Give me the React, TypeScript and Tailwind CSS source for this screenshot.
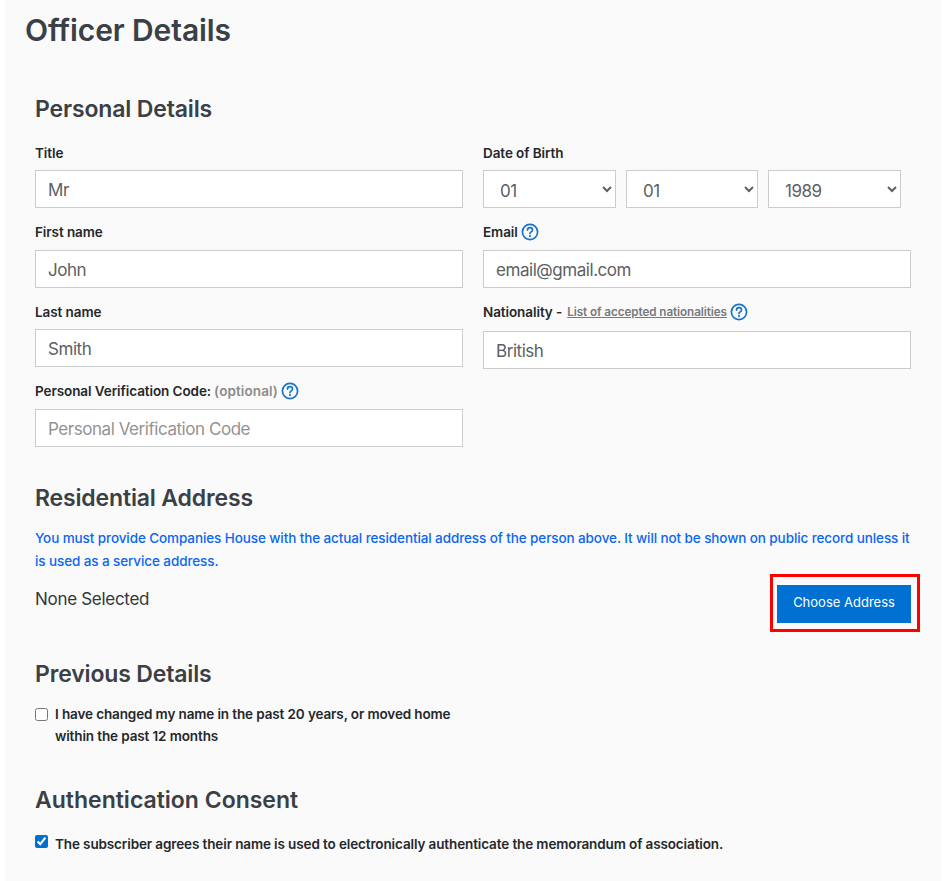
import React from "react";

const Help = ({ className = "" }: { className?: string }) => (
  <svg viewBox="0 0 18 18" className={`w-[18px] h-[18px] shrink-0 ${className}`} fill="none" aria-hidden="true">
    <circle cx="9" cy="9" r="7.6" stroke="#1a73c7" strokeWidth="1.7" />
    <path d="M6.5 7.1c0-1.5 1.1-2.4 2.5-2.4s2.5.9 2.5 2.2c0 1-.5 1.5-1.3 2-.8.5-1.2.9-1.2 1.7" stroke="#1a73c7" strokeWidth="1.7" strokeLinecap="round" />
    <circle cx="9" cy="13.1" r="1.05" fill="#1a73c7" />
  </svg>
);

const inputCls =
  "block w-full h-[38px] border border-[#cccccc] bg-white px-3 pt-[2px] text-[17px] text-[#5c6065] outline-none placeholder:text-[#939393] font-['Inter',sans-serif] tracking-[-0.45px]";
const labelCls = "text-[13.5px] font-semibold text-[#24272b] leading-[20px] tracking-[-0.08px]";
const headCls = "text-[23px] font-semibold text-[#3a4045] leading-[30px] tracking-[-0.15px]";

const Field = ({
  label,
  value,
  placeholder,
  className = "",
  inputGap = "mt-[8px]",
}: {
  label: React.ReactNode;
  value?: string;
  placeholder?: string;
  className?: string;
  inputGap?: string;
}) => (
  <div className={className}>
    <div className={`${labelCls} h-[20px] flex items-center gap-[3px]`}>{label}</div>
    <input className={`${inputCls} ${inputGap}`} readOnly value={value} placeholder={placeholder} />
  </div>
);

const DateSelect = ({ value, className }: { value: string; className: string }) => (
  <select
    defaultValue={value}
    className={`h-[38px] border border-[#cccccc] bg-white pl-3 pt-[4px] text-[17px] text-[#5c6065] outline-none tracking-[-0.45px] ${className}`}
  >
    <option>{value}</option>
  </select>
);

export default function App() {
  return (
    <div className="min-h-[881px] bg-white font-['Inter',sans-serif]">
      <div className="relative ml-[5px] w-[936px] h-[881px] overflow-hidden bg-[#fafafa] px-[30px]">
        <h1 className="-ml-[10px] pt-[11px] text-[30px] font-semibold leading-[38px] text-[#3a4045] tracking-[-0.1px]">
          Officer Details
        </h1>

        <h2 className={`${headCls} mt-[45px] tracking-[-0.2px]`}>Personal Details</h2>

        <div className="mt-[19px] grid grid-cols-[428px_428px] gap-x-[20px]">
          <div className="flex flex-col">
            <Field label="Title" value="Mr" inputGap="mt-[7px]" />
            <Field className="mt-[14px]" label="First name" value="John" />
            <Field className="mt-[14px]" label="Last name" value="Smith" inputGap="mt-[7px]" />
            <Field
              className="mt-[14px]"
              label={
                <>
                  <span>Personal Verification Code:</span>
                  <span className="text-[#8b8b8b] tracking-[0.1px]">(optional)</span>
                  <Help />
                </>
              }
              placeholder="Personal Verification Code"
            />
          </div>
          <div className="flex flex-col">
            <div>
              <div className={labelCls}>Date of Birth</div>
              <div className="mt-[7px] flex gap-[10px]">
                <DateSelect value="01" className="w-[133px]" />
                <DateSelect value="01" className="w-[132px]" />
                <DateSelect value="1989" className="w-[133px]" />
              </div>
            </div>
            <Field
              className="mt-[14px]"
              label={
                <>
                  <span>Email</span>
                  <Help />
                </>
              }
              value="email@gmail.com"
            />
            <div className="mt-[14px]">
              <div className={`${labelCls} h-[20px] flex items-center gap-[3px]`}>
                <span>Nationality -</span>
                <a className="ml-[2px] text-[11.7px] font-semibold text-[#77797c] underline tracking-[-0.08px]">
                  List of accepted nationalities
                </a>
                <Help />
              </div>
              <input className={`${inputCls} mt-[9px]`} readOnly value="British" />
            </div>
          </div>
        </div>

        <h2 className={`${headCls} mt-[36px]`}>Residential Address</h2>
        <p className="mt-[14px] text-[13.5px] font-medium leading-[23px] text-[#0a66f0] tracking-[-0.1px]">
          You must provide Companies House with the actual residential address of the person above. It will not be shown on public record unless it is used as a service address.
        </p>
        <div className="flex items-start justify-between">
          <span className="mt-[14px] text-[17px] leading-[24px] text-[#33373b] tracking-[-0.3px]">None Selected</span>
          <button className="relative mt-[12px] h-[38px] w-[134px] bg-[#0070d2] pb-[3px] text-[13px] text-white">
            Choose Address
            <span className="absolute -left-[7px] -right-[9px] -top-[11px] -bottom-[9px] border-[3px] border-[#ff0000]" />
          </button>
        </div>

        <h2 className={`${headCls} mt-[36px]`}>Previous Details</h2>
        <label className="mt-[14px] flex items-start gap-[7px]">
          <input type="checkbox" readOnly className="mt-[5px] h-[13px] w-[13px] shrink-0" />
          <span className="w-[420px] text-[13.5px] font-semibold leading-[22px] text-[#24272b] tracking-[-0.12px]">
            I have changed my name in the past 20 years, or moved home within the past 12 months
          </span>
        </label>

        <h2 className={`${headCls} mt-[38px] tracking-[0px]`}>Authentication Consent</h2>
        <label className="mt-[20px] flex items-start gap-[7px]">
          <input type="checkbox" defaultChecked className="h-[13px] w-[13px] shrink-0 accent-[#0070d2]" />
          <span className="-mt-[2px] text-[13.5px] font-semibold leading-[22px] text-[#24272b] tracking-[-0.12px]">
            The subscriber agrees their name is used to electronically authenticate the memorandum of association.
          </span>
        </label>
      </div>
    </div>
  );
}
